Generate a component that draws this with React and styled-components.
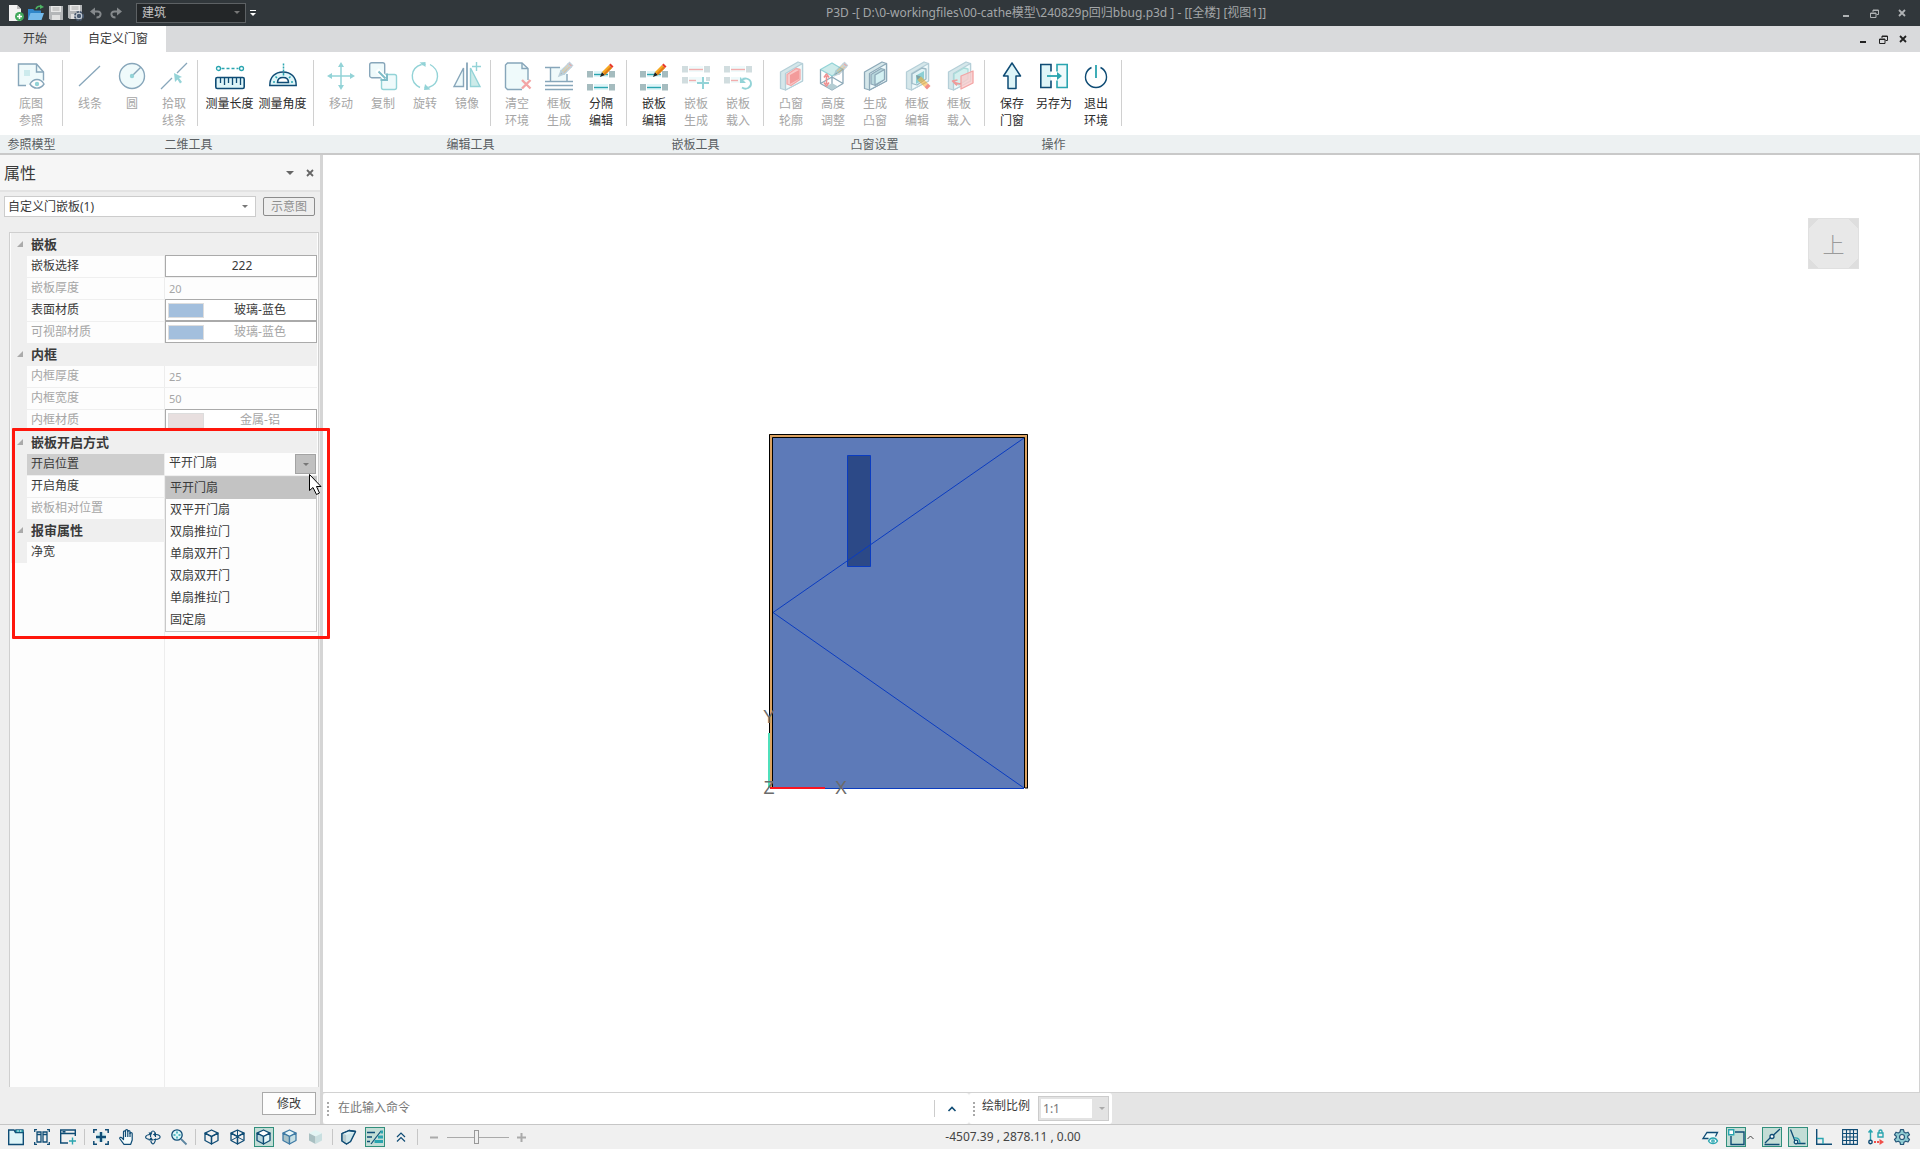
import React from 'react';
import styled, { createGlobalStyle } from 'styled-components';

const color = {
  navy: '#0f4c75',
  teal: '#2aa5b0',
  ice: '#def5f8',
  dimNavy: '#87a6ba',
  dimTeal: '#93d3d7',
  dimIce: '#effafb',
  dimRed: '#f3a5a5',
  text: '#3a3a3a',
  disabled: '#a6a6a6',
  line: '#c9c9c9',
};

const GlobalStyle = createGlobalStyle`
  * {
    box-sizing: border-box;
  }
  body {
    margin: 0;
    font: 12px/16px 'Noto Sans', 'Noto Sans CJK SC', sans-serif;
    color: ${color.text};
    overflow: hidden;
  }
  button, input, select {
    font: inherit;
    color: inherit;
    margin: 0;
    padding: 0;
    border: 0;
    border-radius: 0;
    background: none;
    outline: none;
  }
  svg {
    display: block;
    flex: none;
    overflow: visible;
  }
`;

const Window = styled.div`
  display: flex;
  flex-direction: column;
  height: 100vh;
  background: #eee;
`;

/* title bar */

const TitleBar = styled.header`
  display: flex;
  align-items: center;
  height: 26px;
  background: #31373b;
  color: #a3a6a8;
`;

const QuickAccess = styled.div`
  display: flex;
  align-items: center;
  padding-left: 6px;
`;

const QuickButton = styled.button`
  display: flex;
  align-items: center;
  justify-content: center;
  width: 20px;
  height: 20px;
`;

const ModeSelect = styled.label`
  position: relative;
  width: 110px;
  height: 20px;
  margin: 0 4px 0 10px;
  border: 1px solid #5d6164;
  background: #232628;

  select {
    width: 100%;
    height: 18px;
    padding-left: 5px;
    appearance: none;
    color: #c2c2c2;
  }
  svg {
    position: absolute;
    right: 5px;
    top: 7px;
    pointer-events: none;
  }
`;

const WindowTitle = styled.div`
  flex: 1;
  text-align: center;
  white-space: pre;
`;

const WindowButtons = styled.div`
  display: flex;
  justify-content: flex-end;
  gap: ${(p) => (p.$wide ? 8 : 0)}px;
  padding-right: ${(p) => (p.$wide ? 8 : 7)}px;
  margin-left: auto;
  color: ${(p) => (p.$wide ? '#b0b3b5' : '#222')};
`;

const WindowButton = styled.button`
  display: flex;
  align-items: center;
  justify-content: center;
  width: 20px;
  height: 20px;
`;

const TabBar = styled.nav`
  display: flex;
  align-items: center;
  height: 26px;
  background: #d9dadc;
`;

const Tab = styled.button`
  align-self: stretch;
  padding: 0 ${(p) => (p.$active ? 18 : 23)}px;
  background: ${(p) => (p.$active ? '#fff' : 'transparent')};
`;

/* ribbon */

const Ribbon = styled.div`
  display: flex;
  height: 103px;
  border-bottom: 2px solid ${color.line};
  background: linear-gradient(#fff 83px, #edf1f2 83px);
`;

const Group = styled.section`
  display: flex;
  flex-direction: column;
`;

const GroupBody = styled.div`
  display: flex;
  height: 83px;
  padding: 8px 0 0 ${(p) => (p.$wide ? 10 : 6)}px;
`;

const Divider = styled.div`
  width: 1px;
  height: 66px;
  margin: 0 ${(p) => (p.$inner ? 5 : 0)}px 0
    ${(p) => (p.$inner ? 2 : p.$wide ? 10 : 4)}px;
  background: #d0d0d0;
`;

const GroupTitle = styled.div`
  height: 18px;
  line-height: 20px;
  text-align: center;
  color: #5a5f62;
`;

const Tool = styled.button`
  display: flex;
  flex-direction: column;
  align-items: center;
  width: ${(p) => (p.$wide ? 53 : 42)}px;
  padding-top: 2px;
  line-height: 17px;
  color: ${(p) => (p.disabled ? color.disabled : '#2c2c2c')};

  svg {
    margin-bottom: 5px;
  }
  span {
    max-width: ${(p) => (p.$wide ? 53 : 38)}px;
    white-space: pre-line;
  }
`;

/* property panel */

const Body = styled.div`
  position: relative;
  display: flex;
  flex: 1;
  min-height: 0;
`;

const Panel = styled.aside`
  display: flex;
  flex-direction: column;
  width: 320px;
  background: #eee;
`;

const Splitter = styled.div`
  width: 3px;
  background: #d5d5d5;
`;

const PanelHead = styled.div`
  display: flex;
  align-items: center;
  height: 37px;
  padding-left: 4px;
  border-bottom: 2px solid #e3e3e3;
  background: #f6f6f6;

  h2 {
    flex: 1;
    margin: 0;
    font-size: 16px;
    font-weight: 400;
    line-height: 24px;
  }
`;

const PanelPick = styled.div`
  display: flex;
  align-items: center;
  gap: 7px;
  padding: 4px 5px 0 4px;
`;

const TypeSelect = styled.label`
  position: relative;
  flex: 1;
  height: 21px;
  border: 1px solid #ccc;
  background: #fff;

  select {
    width: 100%;
    height: 19px;
    padding-left: 3px;
    appearance: none;
  }
  svg {
    position: absolute;
    right: 7px;
    top: 8px;
    pointer-events: none;
  }
`;

const DiagramButton = styled.button`
  width: 52px;
  height: 19px;
  border: 1px solid #8c8c8c;
  border-radius: 2px;
  line-height: 17px;
  color: #8f8f8f;
`;

const Grid = styled.div`
  position: relative;
  flex: 1;
  margin: 15px 1px 0 9px;
  padding: 0 1px;
  border: 1px solid #cfcfcf;
  border-bottom: 0;
  background: linear-gradient(
    90deg,
    #fdfdfd 154px,
    #ededed 154px,
    #ededed 155px,
    #fdfdfd 155px
  );
`;

const Category = styled.div`
  display: flex;
  align-items: center;
  gap: 8px;
  height: 22px;
  padding-left: 6px;
  background: #efefef;
  font-size: 13px;
  font-weight: 700;
`;

const Row = styled.div`
  display: grid;
  grid-template-columns: 16px 138px minmax(0, 1fr);
  height: 22px;
  background: #efefef;
  color: ${(p) => (p.$disabled ? color.disabled : color.text)};
`;

const RowLabel = styled.label`
  grid-column: 2;
  height: 21px;
  margin-top: 1px;
  padding-left: 4px;
  border-right: 1px solid #ededed;
  line-height: 20px;
  background: ${(p) => (p.$selected ? '#cecece' : '#fdfdfd')};
`;

const ValueInput = styled.input`
  width: 100%;
  height: 21px;
  margin-top: 1px;
  padding-left: 4px;
  background: #fdfdfd;
  font-size: 11px;
`;

const ValueButton = styled.button`
  display: flex;
  align-items: center;
  width: 100%;
  height: 22px;
  padding: 0 0 0 2px;
  border: 1px solid #aaa;
  background: #fff;
  color: inherit;

  span {
    flex: 1;
    text-align: center;
  }
`;

const Swatch = styled.i`
  width: 36px;
  height: 15px;
  border: 1px solid #ddd;
  background: ${(p) => p.$fill};
`;

const Combo = styled.div`
  display: flex;
  position: relative;
  padding-top: 1px;
  background: #fdfdfd;

  > select {
    flex: 1;
    height: 18px;
    padding-left: 4px;
    appearance: none;
  }
  > button {
    display: flex;
    align-items: center;
    justify-content: center;
    width: 21px;
    height: 20px;
    margin-right: 1px;
    border: 1px solid #a3a3a3;
    background: #c0c0c0;
  }
`;

const Options = styled.ul`
  position: absolute;
  z-index: 1;
  top: 23px;
  left: 0;
  right: 0;
  margin: 0;
  border: 1px solid #c8c8c8;
  padding: 0;
  background: #fdfdfd;
  list-style: none;
`;

const Option = styled.li`
  height: 22px;
  padding-left: 4px;
  line-height: 22px;
  background: ${(p) => (p.$selected ? '#c3c3c3' : 'transparent')};
`;

const PanelFoot = styled.div`
  display: flex;
  justify-content: flex-end;
  padding: 5px 4px 9px;
`;

const ApplyButton = styled.button`
  width: 54px;
  height: 23px;
  border: 1px solid #aaa;
  background: #fdfdfd;
`;

const Highlight = styled.div`
  position: absolute;
  z-index: 2;
  left: 12px;
  top: 273px;
  width: 318px;
  height: 211px;
  border: 3px solid #ff160c;
  border-radius: 1px;
  pointer-events: none;
`;

const Pointer = styled.svg`
  position: absolute;
  z-index: 3;
  left: 309px;
  top: 319px;
`;

/* view */

const Main = styled.main`
  display: flex;
  flex-direction: column;
  flex: 1;
  min-width: 0;
`;

const Viewport = styled.div`
  position: relative;
  flex: 1;
  border-right: 1px solid #d2d2d2;
  border-bottom: 1px solid #d2d2d2;
  background: #fff;
`;

const Drawing = styled.svg`
  position: absolute;
  left: 437px;
  top: 275px;

  text {
    fill: #6b6b6b;
    font: 18px 'Liberation Sans', sans-serif;
    text-anchor: middle;
  }
`;

const ViewCube = styled.button`
  position: absolute;
  top: 63px;
  right: 60px;
  width: 51px;
  height: 51px;
  border: 1px solid #e0e0e0;
  background:
    linear-gradient(45deg, #dedede 7px, transparent 7px),
    linear-gradient(135deg, #dedede 7px, transparent 7px),
    linear-gradient(225deg, #dedede 7px, transparent 7px),
    linear-gradient(315deg, #dedede 7px, #e8e8e8 7px);
  color: #9b9b9b;
  font-size: 22px;
  font-weight: 300;
  line-height: 48px;
`;

const CommandRow = styled.div`
  display: flex;
  height: 31px;
  background: #e5e5e5;
`;

const CommandBar = styled.div`
  display: flex;
  align-items: center;
  width: ${(p) => p.$width}px;
  padding-left: 4px;
  border-radius: 3px;
  background: #fff;
`;

const Grip = styled.i`
  width: 2px;
  height: 14px;
  background: repeating-linear-gradient(#a9a9a9 0 2px, transparent 2px 4px);
`;

const CommandInput = styled.input`
  flex: 1;
  height: 24px;
  margin-left: 9px;
  padding-bottom: 3px;
  &::placeholder {
    color: #777;
    opacity: 1;
  }
`;

const ExpandButton = styled.button`
  display: flex;
  align-items: center;
  justify-content: center;
  width: 35px;
  height: 17px;
  border-left: 1px solid #ccc;
`;

const ScaleField = styled.div`
  display: flex;
  align-items: center;
  gap: 8px;
  margin-left: 7px;

  label {
    padding-bottom: 5px;
  }
`;

const ScaleSelect = styled.span`
  display: flex;
  align-items: center;
  position: relative;
  width: 71px;
  height: 25px;
  padding: 2px;
  border: 1px solid #ccc;
  background: #e3e3e3;

  select {
    width: 51px;
    height: 19px;
    padding-left: 2px;
    appearance: none;
    background: #fff;
    color: #777;
  }
  svg {
    margin-left: 7px;
  }
`;

/* status bar */

const StatusBar = styled.footer`
  display: flex;
  align-items: center;
  height: 25px;
  border-top: 1px solid #c6c6c6;
  background: #f0f0f0;
`;

const StatusTools = styled.div`
  display: flex;
  align-items: center;
  gap: 6px;
  padding-left: 6px;
`;

const StatusToggles = styled(StatusTools)`
  justify-content: flex-end;
  width: 420px;
  padding: 0 8px 0 0;
`;

const SnapGroup = styled.div`
  display: flex;
  align-items: center;
  gap: 1px;
  margin-right: 2px;
`;

const StatusButton = styled.button`
  display: flex;
  align-items: center;
  justify-content: center;
  width: 20px;
  height: 20px;
  border: 1px solid ${(p) => (p.$active ? '#318f7c' : 'transparent')};
  background: ${(p) => (p.$active ? '#c3ddd6' : 'transparent')};
`;

const StatusDivider = styled.i`
  width: 1px;
  height: 16px;
  background: #c6c6c6;
`;

const Zoom = styled.div`
  display: flex;
  align-items: center;
  gap: 8px;
  margin-left: 6px;

  input {
    appearance: none;
    width: 62px;
    height: 16px;
    background: linear-gradient(#aaa, #aaa) center / 100% 1px no-repeat;
  }
  input::-webkit-slider-thumb {
    appearance: none;
    width: 5px;
    height: 14px;
    border: 1px solid #999;
    background: #f0f0f0;
  }
`;

const ZoomButton = styled.button`
  display: flex;
  width: 9px;
  height: 9px;
`;

const Coordinates = styled.output`
  flex: 1;
  padding-bottom: 1px;
  text-align: center;
  color: #444;
  white-space: pre;
`;

/* icons */

const Svg = ({ size = 28, width, children, ...rest }) => (
  <svg
    width={width || size}
    height={size}
    viewBox={`0 0 ${width || size} ${size}`}
    fill="none"
    aria-hidden="true"
    {...rest}
  >
    {children}
  </svg>
);

const Arrow = ({ fill = '#777', w = 6 }) => (
  <svg width={w} height={w / 2} viewBox="0 0 6 3" aria-hidden="true">
    <path d="M0 0h6L3 3z" fill={fill} />
  </svg>
);

const Pencil = ({ dim, x = 0, y = 0 }) => (
  <g transform={`translate(${x} ${y})`} opacity={dim ? 0.5 : 1}>
    <path d="M0 13l2-5 3 3z" fill={dim ? '#777' : '#222'} />
    <path d="M2 8L9 1l3 3-7 7z" fill="#f6a821" />
    <path d="M3.500 9.500L10.500 2.500l1.500 1.500-7 7z" fill="#df7d17" />
    <path d="M9 1l1.500-1.500 3 3L12 4z" fill="#e8392c" />
  </g>
);

const PencilDown = () => (
  <g opacity="0.55">
    <path d="M13 13l5 1.500-3.500 3.500z" fill="#777" />
    <path d="M18 14.500l7 7-3.500 3.500-7-7z" fill="#f6a821" />
    <path d="M25 21.500l2.500 2.500-3.500 3.500-2.500-2.500z" fill="#e8392c" />
  </g>
);

const BaseMap = () => (
  <Svg stroke={color.dimNavy} strokeWidth="1.400">
    <path d="M9 23.500H1.500V2h18l7 8v8.500" fill={color.dimIce} />
    <path d="M19.500 2v8h7" />
    <path d="M7 8h6v6H7z" fill="#cdebed" stroke="none" />
    <path d="M13 22c3.500-6 10.500-6 14 0-3.500 5.500-10.500 5.500-14 0z" fill="#fff" />
    <circle cx="20" cy="22" r="1.500" fill={color.dimTeal} stroke={color.dimTeal} />
  </Svg>
);

const Line = () => (
  <Svg stroke={color.dimNavy} strokeWidth="1.300">
    <path d="M3 24L24 4" />
  </Svg>
);

const Circle = () => (
  <Svg stroke={color.dimNavy} strokeWidth="1.400">
    <circle cx="14" cy="14" r="12.500" fill={color.dimIce} />
    <path d="M14 14l9-9" />
    <circle cx="14" cy="14" r="2.200" fill={color.dimTeal} stroke="none" />
  </Svg>
);

const PickLine = () => (
  <Svg stroke={color.dimNavy} strokeWidth="1.300">
    <path d="M1 27l11-11M17 11L27 1" />
    <path d="M14 11l8 4-3 1 3 4-2 1.500-2.500-4-2.500 2.500z" fill={color.dimTeal} stroke="none" />
  </Svg>
);

const Ruler = () => (
  <Svg width={30} stroke={color.teal} strokeWidth="1.300">
    <circle cx="3.500" cy="6.500" r="2" />
    <circle cx="26.500" cy="6.500" r="2" />
    <path d="M6.500 6.500h17" strokeDasharray="3 2" />
    <rect x="0.800" y="15.500" width="28.400" height="11" rx="1.500" fill={color.ice} stroke={color.navy} strokeWidth="1.600" />
    <path d="M5.500 16v5M9.500 16v7M13.500 16v5M17.500 16v7M21.500 16v5M25.500 16v7" stroke={color.navy} />
  </Svg>
);

const Protractor = () => (
  <Svg stroke={color.navy} strokeWidth="1.500">
    <path d="M0.800 23.500C0.800 15 6 10 14 10s13.200 5 13.200 13.500z" fill={color.ice} />
    <path d="M8.500 20.500c0-3.500 2-5 5.500-5s5.500 1.500 5.500 5z" fill="#fff" />
    <path d="M14.500 1.500v8" stroke={color.teal} strokeDasharray="2 1" />
    <path d="M14.500 11v2.500M4 20h2M24 20h-2M6.500 14.500l1.500 1.500M21.500 14.500L20 16" stroke={color.teal} />
  </Svg>
);

const Move = () => (
  <Svg stroke={color.dimTeal} strokeWidth="1.500">
    <path d="M14 4v20M4 14h20" />
    <path d="M14 0l3 5h-6zM14 28l3-5h-6zM0 14l5-3v6zM28 14l-5-3v6z" fill={color.dimTeal} stroke="none" />
  </Svg>
);

const Copy = () => (
  <Svg stroke={color.dimTeal} strokeWidth="1.400">
    <rect x="0.700" y="0.700" width="15" height="15" rx="2" fill={color.dimIce} stroke={color.dimNavy} />
    <rect x="12.500" y="12.500" width="15" height="15" rx="2" fill={color.dimIce} />
    <path d="M8 8l9 9" stroke="#fff" strokeWidth="5" />
    <path d="M9.500 9.500l7 7M18 11.500V18h-6.500" stroke="#7fbcc8" strokeWidth="2" />
  </Svg>
);

const Rotate = () => (
  <Svg stroke={color.dimTeal} strokeWidth="1.400">
    <path d="M9 25.500C-2 20-1 6 10.500 2.500M19 2.500C29.500 8 29 22 17.500 25.500" />
    <path d="M8.500 0.500l6-0.500v5zM19.500 27.500l-6.500 0.500 1-6z" fill={color.dimTeal} stroke="none" />
    <path d="M10.500 2.500h4M17.500 25.500h-4" />
  </Svg>
);

const Mirror = () => (
  <Svg stroke={color.dimNavy} strokeWidth="1.400">
    <path d="M1 24.500L10.500 6v18.500z" fill={color.dimIce} />
    <path d="M17.500 6v18.500H27z" fill="#cdebe9" stroke={color.dimTeal} />
    <path d="M14 0.500V28" strokeWidth="1.800" />
    <path d="M23.500 0v9M19 4.500h9" stroke={color.dimTeal} />
  </Svg>
);

const ClearDoc = () => (
  <Svg stroke={color.dimNavy} strokeWidth="1.400">
    <path d="M19 27.500H4.500l-2-2V3l2-2H19l6 5.500V18" fill={color.dimIce} />
    <path d="M19 1v5.500h6" />
    <path d="M19 18l8.500 8.500M27.500 18L19 26.500" stroke={color.dimRed} strokeWidth="2.400" />
  </Svg>
);

const FrameBuild = () => (
  <Svg stroke={color.dimNavy} strokeWidth="1.400">
    <path d="M6 5.500h16v13H6z" fill={color.dimIce} stroke="none" />
    <path d="M0 5.500h15M5.500 5.500v13.500M22 12v7M0 19.500h28M0 23.500h28M0 27.500h28" />
    <Pencil x={14} y={1} dim />
  </Svg>
);

const BAR_COLORS = {
  on: ['#a5bcbf', color.teal, color.ice],
  off: ['#d1dddf', '#f2adad', color.dimIce],
};

const Bars = ({ y, second, tone, short }) => {
  const [block, stroke, back] = BAR_COLORS[tone];
  return [y, second].map((top) => (
    <g key={top}>
      <path d={`M7 ${top}h14v6H7z`} fill={back} />
      <path d={`M0 ${top}h6v6.500H0z`} fill={block} />
      <path d={`M22 ${top}h6v6.500h-6z`} fill={short && top === second ? '#fff' : block} />
      <path
        d={`M7 ${top + 3.5}h${short && top === second ? 7 : 14}`}
        stroke={stroke}
        strokeWidth="1.400"
      />
    </g>
  ));
};

const SplitEdit = () => (
  <Svg>
    <Bars y={9} second={22} tone="on" />
    <Pencil x={13} y={2} />
  </Svg>
);

const InlayBuild = () => (
  <Svg>
    <Bars y={4} second={15} tone="off" short />
    <path d="M24 15h4v4h-4z" fill="#d1dddf" />
    <path d="M21 15v12M15 21h12" stroke={color.dimTeal} strokeWidth="2" />
  </Svg>
);

const InlayLoad = () => (
  <Svg>
    <Bars y={4} second={15} tone="off" short />
    <path d="M17.500 18.500c3-3.500 9-2 9.500 2.500s-5 7.500-9 4.500" stroke={color.dimTeal} strokeWidth="1.800" />
    <path d="M16 15v6h6z" fill={color.dimTeal} />
  </Svg>
);

const Slab = ({ dark, children }) => {
  const stroke = dark ? '#8da9b8' : '#b5cfd8';
  return (
    <g strokeWidth="1.300" strokeLinejoin="round">
      <path d="M3.500 10L21 0l4.500 1.500V19L8.500 28l-5-1.500z" fill="#d5e7ea" stroke={stroke} />
      <path d="M8.500 11.500l17-10V19L8.500 28z" fill={color.dimIce} stroke={stroke} />
      {children}
    </g>
  );
};

const BayOutline = () => (
  <Svg>
    <Slab>
      <path d="M10 12.500l9-6 4 1v10l-9 6-4-1.500z" fill="#f9c9c9" stroke={color.dimRed} />
      <path d="M13 13l9-5v9l-9 5z" fill="#f39b9b" />
    </Slab>
  </Svg>
);

const BayHeight = () => (
  <Svg stroke="#8da9b8" strokeWidth="1.300" strokeLinejoin="round">
    <path d="M1.500 7.500L13 1l11 6.500L13 14z" fill="#cdebea" stroke={color.dimTeal} />
    <path d="M1.500 7.500v14L13 28l11-6.500v-14M13 14v14M1.500 21.500L13 15l11 6.500" />
    <path d="M13 28l-6-3.500 6-3.500 6 3.500z" fill="#b4cdd3" stroke="none" />
    <path d="M7.500 14v8M5 15.500L7.500 12l2.500 3.500M5 20.500L7.500 24l2.500-3.500" stroke="#ee9090" strokeWidth="1.600" />
    <Pencil x={15} y={1} dim />
  </Svg>
);

const BayBuild = () => (
  <Svg>
    <Slab dark>
      <path d="M10 12.500l10-6 3.500 1v10l-9 6-4.500-1.500z" fill="#b9d8dd" stroke="#8da9b8" />
      <path d="M14 13l9.500-5.500v10L14 23z" fill="#d4f1f3" stroke="#8da9b8" />
    </Slab>
  </Svg>
);

const BayEdit = () => (
  <Svg>
    <Slab>
      <path d="M9 12l10-6 4 1v10l-9 6-5-1.500z" fill="#e2f3f5" stroke="#9cb9c5" />
      <path d="M13 13.500l8-4.500v8.500l-8 4.500z" fill="#8ccfd4" />
      <PencilDown />
    </Slab>
  </Svg>
);

const BayLoad = () => (
  <Svg>
    <Slab>
      <path d="M9 12l10-6 4 1v10l-9 6-5-1.500z" fill="#d4efee" stroke="#a9dbd9" />
      <path d="M16 14l12-5v12l-12 6z" fill="#f9caca" fillOpacity="0.800" stroke={color.dimRed} />
      <path d="M16 21.500c-3 1-5 0-8-2M12 23.500l-4.500-4.500 5-1" stroke="#f09a9a" strokeWidth="1.600" />
    </Slab>
  </Svg>
);

const SaveUp = () => (
  <Svg stroke={color.navy} strokeWidth="1.500" strokeLinejoin="round">
    <path d="M14 1l8.500 13h-4.500v12.500h-8V14H5.500z" fill={color.ice} />
  </Svg>
);

const SaveAs = () => (
  <Svg stroke={color.navy} strokeWidth="1.600">
    <path d="M11 9.500V2.500H0.800v23H11v-7" fill={color.ice} />
    <path d="M17 9.500V2.500h10.200v23H17v-7" stroke={color.teal} fill={color.dimIce} />
    <path d="M7 14h12" stroke={color.teal} strokeWidth="1.800" />
    <path d="M17 10l5 4-5 4z" fill={color.teal} stroke="none" />
  </Svg>
);

const Power = () => (
  <Svg stroke={color.navy} strokeWidth="1.400">
    <path d="M14 3v13" stroke={color.teal} strokeWidth="1.800" />
    <path d="M9.500 5.500a10.500 10.500 0 1 0 9 0" />
  </Svg>
);

const Cube = ({ faces = ['none', 'none', 'none'], stroke = color.navy, wire }) => (
  <Svg size={16} stroke={stroke} strokeWidth="1.300" strokeLinejoin="round">
    <path d="M7.500 1l6.500 3.200-6.500 3.300L1 4.200z" fill={faces[0]} />
    <path d="M1 4.200l6.500 3.300V15L1 11.500z" fill={faces[1]} />
    <path d="M14 4.200L7.500 7.500V15l6.500-3.500z" fill={faces[2]} />
    {wire && <path d="M7.500 1v7.500M1 11.500L7.500 8l6.500 3.500" strokeWidth="1" />}
  </Svg>
);

const statusLeft = [
  {
    label: '打开视图',
    icon: (
      <Svg size={16} stroke={color.navy} strokeWidth="1.400">
        <path d="M0.700 1h5.300l1.500 2.500h7.800v12H0.700z" fill={color.ice} />
        <path d="M7.500 0.700h7.800V3.500H7.500z" fill={color.teal} strokeWidth="0.800" />
        <path d="M10 1v2M12.800 1v2" stroke="#fff" strokeWidth="0.800" />
      </Svg>
    ),
  },
  {
    label: '平铺窗口',
    icon: (
      <Svg size={16} stroke={color.navy} strokeWidth="1.300">
        <path d="M3 0.700H0.700V3M13 0.700h2.300V3M3 15.300H0.700V13M13 15.300h2.300V13" />
        <path d="M3 3h4v10H3zM9 3h4v10H9zM3 5.500h4M9 5.500h4" />
      </Svg>
    ),
  },
  {
    label: '新建窗口',
    icon: (
      <Svg size={16} stroke={color.navy} strokeWidth="1.400">
        <path d="M8 14H0.700V1h14.600v6M0.700 4.500h14.600M2.500 2.800h3" />
        <path d="M12.500 8.500v7M9 12h7" stroke={color.teal} />
      </Svg>
    ),
  },
  null,
  {
    label: '全图',
    icon: (
      <Svg size={16} stroke={color.navy} strokeWidth="1.500">
        <circle cx="8" cy="8" r="5" fill="#cfeef2" stroke="none" />
        <path d="M4 0.800H0.800V4M12 0.800h3.200V4M4 15.200H0.800V12M12 15.200h3.200V12" />
        <path d="M8 3v10M3 8h10" strokeWidth="2.400" />
      </Svg>
    ),
  },
  {
    label: '平移',
    icon: (
      <Svg size={16} stroke={color.navy} strokeWidth="1.200" strokeLinejoin="round">
        <path
          d="M5 15.300L1 10c-1-1.500 1-2.400 2-1l1.500 1.500V3c0-1.500 2-1.500 2 0V1.700c0-1.500 2.300-1.500 2.300 0V2.500c0-1.300 2.200-1.300 2.200 0v2c0-1.300 2.200-1.300 2.200 0V11l-1.500 4.300z"
          fill="#f4fcfd"
        />
        <path d="M6.500 3v5M8.800 2v6M11 3.500V8" />
      </Svg>
    ),
  },
  {
    label: '动态观察',
    icon: (
      <Svg size={16} stroke={color.navy} strokeWidth="1.200">
        <path d="M5.500 5.500c-6 0.500-6.500 4-1 5M8.500 10.500h2c6-0.500 6-4.500 0.500-5H8.500" />
        <path d="M5.500 8c0-8 5-8 5 0M10.500 9.500c-0.500 6-3.500 7-4.700 2.500" />
        <path d="M3.500 3.500h4L5.500 7zM8 5.500l3-2.200v4.400zM3.500 11.500L6 8l2.500 3.500z" fill={color.navy} stroke="none" />
      </Svg>
    ),
  },
  {
    label: '缩放',
    icon: (
      <Svg size={16} stroke={color.navy} strokeWidth="1.300">
        <circle cx="6" cy="6" r="5.200" fill={color.ice} />
        <path d="M6 2.500v7M2.500 6h7" stroke={color.teal} strokeWidth="1.500" strokeDasharray="2 3" />
        <path d="M10 10l5.500 5.500" stroke="#5d86a0" strokeWidth="1.800" />
      </Svg>
    ),
  },
  null,
  { label: '线框', icon: <Cube /> },
  { label: '透明线框', icon: <Cube wire /> },
  { label: '消隐', icon: <Cube faces={['#fff', '#b9d6dc', '#e3f5f7']} />, active: true },
  { label: '着色', icon: <Cube faces={['#e8f6f8', '#a9c3c9', '#c7e0e5']} stroke="#3f7ba5" /> },
  { label: '真实', icon: <Cube faces={['#e3f5f4', '#a9c0c2', '#c9dfe0']} stroke="none" /> },
  null,
  {
    label: '剖切',
    icon: (
      <Svg size={16} stroke={color.navy} strokeWidth="1.300" strokeLinejoin="round">
        <path d="M1 4.500L8 1.500l6.500 1-5 10L5.500 15 1 12z" fill="#dff1f4" />
        <path d="M1 4.500L5.500 6v9L1 12z" fill="#b9cdd1" stroke="none" />
        <path d="M5.500 6l9-3.500-5 10L5.500 15z" fill="#cfe6ea" stroke="none" />
        <path d="M1 4.500L8 1.500l6.500 1-5 10L5.500 15 1 12z" />
      </Svg>
    ),
  },
  {
    label: '背景',
    active: true,
    icon: (
      <Svg size={16} stroke={color.navy} strokeWidth="1.600">
        <path d="M0 3.500h8M0 8h5M0 12.500h3" />
        <path d="M4 15L14 2" strokeWidth="1.200" />
        <path d="M13.500 3h2.500M11 8h5M7.500 12.500h8.500" stroke={color.teal} strokeWidth="3" />
      </Svg>
    ),
  },
  {
    label: '更多',
    icon: (
      <Svg size={10} stroke={color.navy} strokeWidth="1.200">
        <path d="M1 5l4-4 4 4M1 9.500l4-4 4 4" />
      </Svg>
    ),
  },
  null,
];

const statusRight = [
  {
    label: '工作平面',
    icon: (
      <Svg size={16} stroke={color.navy} strokeWidth="1.300">
        <path d="M6.500 9.500H1l4-6h10.500l-2 4" fill={color.dimIce} />
        <path d="M6.500 12c2-4 7-4 9 0-2 3.500-7 3.500-9 0z" stroke={color.teal} fill="#fff" />
        <circle cx="11" cy="12" r="1.200" stroke={color.teal} />
      </Svg>
    ),
  },
  {
    label: '对象捕捉',
    active: true,
    icon: (
      <Svg size={18} stroke={color.navy} strokeWidth="1.400">
        <path d="M8 4h9v12.500H4V8" />
        <path d="M1.700 1.700h5v5h-5z" fill="#fff" stroke={color.teal} />
      </Svg>
    ),
  },
  {
    label: '捕捉线段',
    active: true,
    icon: (
      <Svg size={18} stroke={color.navy} strokeWidth="1.300">
        <path d="M1.500 16.500h15M2 15l5.500-5.500M10.500 7L17 1" />
        <circle cx="9" cy="8.500" r="2" fill="#fff" />
      </Svg>
    ),
  },
  {
    label: '极轴',
    active: true,
    icon: (
      <Svg size={18} stroke={color.navy} strokeWidth="1.300">
        <path d="M1.500 1.500l5.500 14h9.500" />
        <path d="M5 10c4-1 6 2 6 5" stroke={color.teal} />
        <circle cx="7" cy="14" r="1.800" fill={color.ice} />
      </Svg>
    ),
  },
  {
    label: '正交',
    icon: (
      <Svg size={16} stroke={color.navy} strokeWidth="1.400">
        <path d="M0.700 0v15.300H16" />
        <path d="M1 9.500h6V15" stroke={color.teal} />
      </Svg>
    ),
  },
  {
    label: '栅格',
    icon: (
      <Svg size={16} stroke={color.navy} strokeWidth="1.100">
        <path d="M0.600 0.600h14.800v14.800H0.600zM4.500 0.600v14.800M8 0.600v14.800M11.500 0.600v14.800M0.600 4.500h14.800M0.600 8h14.800M0.600 11.500h14.800" />
      </Svg>
    ),
  },
  {
    label: '坐标锁定',
    icon: (
      <Svg size={16} stroke={color.teal} strokeWidth="1.400">
        <path d="M2.500 11V2M0.500 3.500l2-2.500 2 2.500" />
        <circle cx="2.500" cy="13" r="1.700" stroke={color.navy} />
        <path d="M6 13h6" stroke="#f0504a" strokeDasharray="2 1" strokeWidth="1.800" />
        <path d="M11.500 10l4.500 3-4.500 3z" fill="#f0504a" stroke="none" />
        <path d="M10 4h5v4h-5zM11 4V2.500c0-2 3-2 3 0V4" />
      </Svg>
    ),
  },
  {
    label: '设置',
    icon: (
      <Svg size={16} stroke="#28587a" strokeWidth="1.200" strokeLinejoin="round">
        <path
          d="M6.500 0.700h3l0.500 2.300 1.700 1 2.300-0.800 1.500 2.600-1.800 1.500v1.500l1.800 1.600-1.500 2.600-2.300-0.800-1.700 1-0.500 2.300h-3L6 13.200l-1.700-1L2 13 0.500 10.400l1.800-1.600V7.300L0.500 5.800 2 3.200 4.300 4 6 3z"
          fill="#8fcbd2"
        />
        <circle cx="8" cy="8" r="2.500" fill="#f0f0f0" />
      </Svg>
    ),
  },
];

const quickIcons = [
  {
    label: '新建',
    icon: (
      <Svg size={16}>
        <path d="M1 0h8l4 4v12H1z" fill="#f2f2f2" />
        <path d="M9 0v4h4z" fill="#bdbdbd" />
        <circle cx="11.500" cy="11.500" r="4.500" fill="#41a95b" />
        <path d="M11.500 9v5M9 11.500h5" stroke="#fff" strokeWidth="1.500" />
      </Svg>
    ),
  },
  {
    label: '打开',
    icon: (
      <Svg size={16}>
        <path d="M0 4h5l1.500 1.500H13V15H0z" fill="#2f86c9" />
        <path d="M2.500 8H16l-2.500 7H0z" fill="#74b9ea" />
        <path d="M8 4c1-2.500 3-3 5-2.500" stroke="#4fb364" strokeWidth="1.600" />
        <path d="M12 -0.500l4 2.500-4 2z" fill="#4fb364" />
      </Svg>
    ),
  },
  {
    label: '保存',
    icon: (
      <Svg size={14}>
        <path d="M0 0h14v14H1.500L0 12.500z" fill="#b4b6b8" />
        <path d="M2 0h10v6H2z" fill="#e8e8e8" />
        <path d="M3.500 2h7M3.500 4h7" stroke="#aaa" />
        <path d="M3 9h8v5H3z" fill="#e0e0e0" />
      </Svg>
    ),
  },
  {
    label: '另存为',
    icon: (
      <Svg size={16}>
        <path d="M0 0h14v14H1.500L0 12.500z" fill="#b4b6b8" />
        <path d="M2 0h10v6H2z" fill="#e8e8e8" />
        <path d="M3.500 2h7M3.500 4h7" stroke="#aaa" />
        <path d="M3 9h5v5H3z" fill="#e0e0e0" />
        <circle cx="11" cy="11" r="3.500" stroke="#4a5a70" strokeWidth="3" strokeDasharray="2 0.800" />
        <circle cx="11" cy="11" r="2.800" fill="#4a5a70" stroke="#d6dde4" />
      </Svg>
    ),
  },
  {
    label: '撤销',
    icon: (
      <Svg size={12} stroke="#85898c" strokeWidth="2">
        <path d="M3 4.500h4.500c4.500 0 4 6-1 6" />
        <path d="M5 0.500v8L0 4.500z" fill="#85898c" stroke="none" />
      </Svg>
    ),
  },
  {
    label: '重做',
    icon: (
      <Svg size={12} stroke="#85898c" strokeWidth="2">
        <path d="M9 4.500H4.500c-4.500 0-4 6 1 6" />
        <path d="M7 0.500v8l5-4z" fill="#85898c" stroke="none" />
      </Svg>
    ),
  },
];

/* data */

const ribbon = [
  { title: '参照模型', wide: true, tools: [['底图\n参照', BaseMap]] },
  {
    title: '二维工具',
    tools: [
      ['线条', Line],
      ['圆', Circle],
      ['拾取\n线条', PickLine],
      null,
      ['测量长度', Ruler, 'wide'],
      ['测量角度', Protractor, 'wide'],
    ],
  },
  {
    title: '编辑工具',
    tools: [
      ['移动', Move],
      ['复制', Copy],
      ['旋转', Rotate],
      ['镜像', Mirror],
      null,
      ['清空\n环境', ClearDoc],
      ['框板\n生成', FrameBuild],
      ['分隔\n编辑', SplitEdit, 'on'],
    ],
  },
  {
    title: '嵌板工具',
    tools: [
      ['嵌板\n编辑', SplitEdit, 'on'],
      ['嵌板\n生成', InlayBuild],
      ['嵌板\n载入', InlayLoad],
    ],
  },
  {
    title: '凸窗设置',
    tools: [
      ['凸窗\n轮廓', BayOutline],
      ['高度\n调整', BayHeight],
      ['生成\n凸窗', BayBuild],
      ['框板\n编辑', BayEdit],
      ['框板\n载入', BayLoad],
    ],
  },
  {
    title: '操作',
    tools: [
      ['保存\n门窗', SaveUp, 'on'],
      ['另存为', SaveAs, 'on'],
      ['退出\n环境', Power, 'on'],
    ],
  },
];

const GLASS = '#a3bfdd';

const properties = [
  {
    title: '嵌板',
    rows: [
      { label: '嵌板选择', button: '222' },
      { label: '嵌板厚度', value: '20', disabled: true },
      { label: '表面材质', button: '玻璃-蓝色', swatch: GLASS },
      { label: '可视部材质', button: '玻璃-蓝色', swatch: GLASS, disabled: true },
    ],
  },
  {
    title: '内框',
    rows: [
      { label: '内框厚度', value: '25', disabled: true },
      { label: '内框宽度', value: '50', disabled: true },
      { label: '内框材质', button: '金属-铝', swatch: '#e8dfdf', disabled: true },
    ],
  },
  {
    title: '嵌板开启方式',
    rows: [
      { label: '开启位置', combo: true },
      { label: '开启角度', value: '' },
      { label: '嵌板相对位置', value: '', disabled: true },
    ],
  },
  { title: '报审属性', rows: [{ label: '净宽', value: '' }] },
];

const openings = [
  '平开门扇',
  '双平开门扇',
  '双扇推拉门',
  '单扇双开门',
  '双扇双开门',
  '单扇推拉门',
  '固定扇',
];

const WindowControls = ({ wide }) => (
  <WindowButtons $wide={wide}>
    <WindowButton aria-label="最小化">
      <Svg size={8} stroke="currentColor" strokeWidth="2">
        <path d="M1 7h6" />
      </Svg>
    </WindowButton>
    <WindowButton aria-label="还原">
      <Svg size={9} stroke="currentColor">
        <path d="M3 3V1h5.500v4.500H6.500M3 1.500h5.500M0.500 4h5.500v4.500H0.500zM0.500 4.500h5.500" />
      </Svg>
    </WindowButton>
    <WindowButton aria-label="关闭">
      <Svg size={8} stroke="currentColor" strokeWidth="1.800">
        <path d="M1 1l6 6M7 1L1 7" />
      </Svg>
    </WindowButton>
  </WindowButtons>
);

const PropertyValue = ({ row, id }) => {
  if (row.combo) {
    return (
      <Combo>
        <select id={id} defaultValue={openings[0]}>
          {openings.map((name) => (
            <option key={name}>{name}</option>
          ))}
        </select>
        <button aria-label="展开" aria-expanded="true">
          <Arrow />
        </button>
        <Options role="listbox" aria-label={row.label}>
          {openings.map((name, i) => (
            <Option
              key={name}
              role="option"
              aria-selected={i === 0}
              $selected={i === 0}
            >
              {name}
            </Option>
          ))}
        </Options>
      </Combo>
    );
  }
  if (row.button) {
    return (
      <ValueButton id={id} disabled={row.disabled}>
        {row.swatch && <Swatch $fill={row.swatch} />}
        <span>{row.button}</span>
      </ValueButton>
    );
  }
  return <ValueInput id={id} defaultValue={row.value} disabled={row.disabled} />;
};

const PropertyPanel = () => (
  <Panel>
    <PanelHead>
      <h2>属性</h2>
      <WindowButton aria-label="菜单">
        <Arrow w={8} fill="#666" />
      </WindowButton>
      <WindowButton aria-label="关闭">
        <Svg size={8} stroke="#666" strokeWidth="1.800">
          <path d="M1 1l6 6M7 1L1 7" />
        </Svg>
      </WindowButton>
    </PanelHead>
    <PanelPick>
      <TypeSelect>
        <select aria-label="构件类型">
          <option>自定义门嵌板(1)</option>
        </select>
        <Arrow w={6} />
      </TypeSelect>
      <DiagramButton>示意图</DiagramButton>
    </PanelPick>
    <Grid>
      {properties.map((group, g) => (
        <React.Fragment key={group.title}>
          <Category>
            <Svg size={6}>
              <path d="M6 0v6H0z" fill="#aaa" />
            </Svg>
            {group.title}
          </Category>
          {group.rows.map((row, i) => (
            <Row key={row.label} $disabled={row.disabled}>
              <RowLabel htmlFor={`prop-${g}-${i}`} $selected={row.combo}>
                {row.label}
              </RowLabel>
              <PropertyValue row={row} id={`prop-${g}-${i}`} />
            </Row>
          ))}
        </React.Fragment>
      ))}
    </Grid>
    <PanelFoot>
      <ApplyButton>修改</ApplyButton>
    </PanelFoot>
  </Panel>
);

const DoorDrawing = () => (
  <Drawing width="300" height="370" viewBox="0 0 300 370">
    <path d="M9 4h259v354H9z" fill="#dba363" />
    <path d="M9.500 358V4.500h258V358M265 358h3" fill="none" stroke="#000" />
    <path d="M12 7h253v351H12z" fill="#5d7ab8" />
    <path d="M12.500 358V7.500h252V358" fill="none" stroke="#000" />
    <path d="M87.500 25.500h23v111h-23z" fill="#2c4987" stroke="#0a3cc0" />
    <path d="M264 8L13 182.500 264 358" fill="none" stroke="#0a3cc0" />
    <path d="M12 358.500h252" stroke="#0a3cc0" />
    <path d="M9 303v55" stroke="#4fe0bb" strokeWidth="2" />
    <path d="M10 358h55" stroke="#fb1420" strokeWidth="2" />
    <text x="9" y="293">Y</text>
    <text x="9" y="364">Z</text>
    <text x="81" y="364">X</text>
  </Drawing>
);

const StatusItems = ({ items }) =>
  items.map((item, i) =>
    item ? (
      <StatusButton key={item.label} $active={item.active} aria-label={item.label}>
        {item.icon}
      </StatusButton>
    ) : (
      <StatusDivider key={i} />
    )
  );

const App = () => (
  <Window>
    <GlobalStyle />
    <TitleBar>
      <QuickAccess>
        {quickIcons.map(({ label, icon }) => (
          <QuickButton key={label} aria-label={label}>
            {icon}
          </QuickButton>
        ))}
        <ModeSelect>
          <select aria-label="专业">
            <option>建筑</option>
          </select>
          <Arrow w={6} />
        </ModeSelect>
        <Svg size={6} stroke="#fff">
          <path d="M0 0.500h6" />
          <path d="M0 3h6L3 6z" fill="#fff" stroke="none" />
        </Svg>
      </QuickAccess>
      <WindowTitle>
        {'P3D -[ D:\\0-workingfiles\\00-cathe模型\\240829p回归bbug.p3d ] - [[全楼] [视图1]]'}
      </WindowTitle>
      <WindowControls wide />
    </TitleBar>
    <TabBar>
      <Tab>开始</Tab>
      <Tab $active>自定义门窗</Tab>
      <WindowControls />
    </TabBar>
    <Ribbon>
      {ribbon.map((group) => (
        <Group key={group.title}>
          <GroupBody $wide={group.wide}>
            {group.tools.map((tool, i) => {
              if (!tool) return <Divider key={i} $inner />;
              const [label, Icon, mode] = tool;
              return (
                <Tool key={label} disabled={!mode} $wide={mode === 'wide'}>
                  <Icon />
                  <span>{label}</span>
                </Tool>
              );
            })}
            <Divider $wide={group.wide} />
          </GroupBody>
          <GroupTitle>{group.title}</GroupTitle>
        </Group>
      ))}
    </Ribbon>
    <Body>
      <PropertyPanel />
      <Splitter />
      <Main>
        <Viewport>
          <DoorDrawing />
          <ViewCube>上</ViewCube>
        </Viewport>
        <CommandRow>
          <CommandBar $width={646}>
            <Grip />
            <CommandInput placeholder="在此输入命令" aria-label="命令" />
            <ExpandButton aria-label="展开命令行">
              <Svg size={8} stroke={color.navy} strokeWidth="1.600">
                <path d="M0.500 6L4 2.500 7.500 6" />
              </Svg>
            </ExpandButton>
          </CommandBar>
          <CommandBar $width={143}>
            <Grip />
            <ScaleField>
              <label htmlFor="draw-scale">绘制比例</label>
              <ScaleSelect>
                <select id="draw-scale">
                  <option>1:1</option>
                </select>
                <Arrow w={6} fill="#aaa" />
              </ScaleSelect>
            </ScaleField>
          </CommandBar>
        </CommandRow>
      </Main>
      <Highlight />
      <Pointer width="14" height="22" viewBox="0 0 14 22" aria-hidden="true">
        <path
          d="M0.500 0.500v16l3.500-3 3.500 7 3-1.500-3-6.500h4.500z"
          fill="#fff"
          stroke="#000"
        />
      </Pointer>
    </Body>
    <StatusBar>
      <StatusTools>
        <StatusItems items={statusLeft} />
        <Zoom>
          <ZoomButton aria-label="缩小">
            <Svg size={9} stroke="#aaa" strokeWidth="2">
              <path d="M0 4.500h8" />
            </Svg>
          </ZoomButton>
          <input type="range" defaultValue="48" aria-label="缩放比例" />
          <ZoomButton aria-label="放大">
            <Svg size={9} stroke="#aaa" strokeWidth="2">
              <path d="M0 4.500h9M4.500 0v9" />
            </Svg>
          </ZoomButton>
        </Zoom>
      </StatusTools>
      <Coordinates>-4507.39 , 2878.11 , 0.00</Coordinates>
      <StatusToggles>
        <StatusItems items={statusRight.slice(0, 1)} />
        <SnapGroup>
          <StatusItems items={statusRight.slice(1, 2)} />
          <Svg size={7} stroke="#444">
            <path d="M0.500 5L3.500 2l3 3" />
          </Svg>
        </SnapGroup>
        <StatusItems items={statusRight.slice(2)} />
      </StatusToggles>
    </StatusBar>
  </Window>
);

export default App;
